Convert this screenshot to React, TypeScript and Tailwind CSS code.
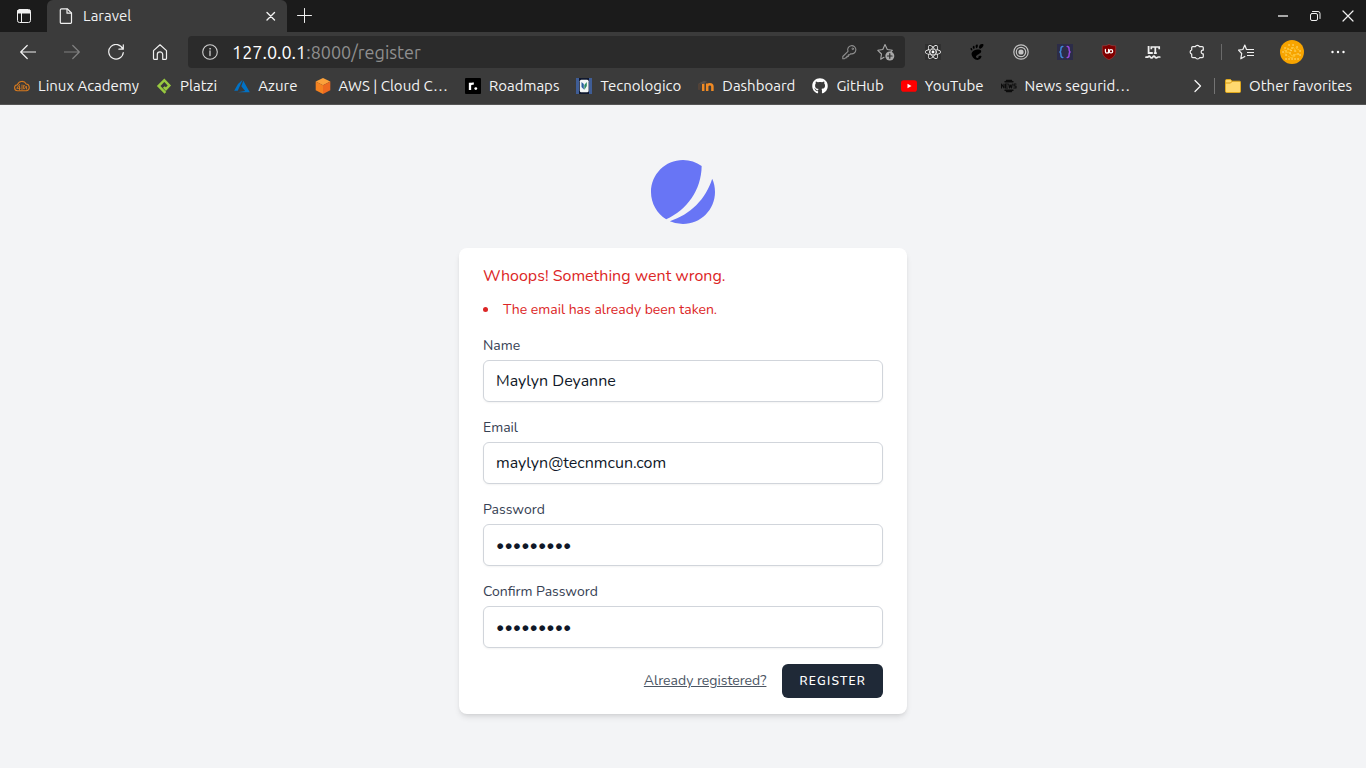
import type { ReactNode } from "react";
import { FaGithub, FaReact, FaYoutube } from "react-icons/fa";
import { SiGnome } from "react-icons/si";

const line = {
  fill: "none",
  stroke: "currentColor",
  strokeLinecap: "round" as const,
  strokeLinejoin: "round" as const,
};

function Glyph({ children, size = 16, className = "" }: { children: ReactNode; size?: number; className?: string }) {
  return (
    <svg width={size} height={size} viewBox={`0 0 ${size} ${size}`} className={`shrink-0 ${className}`} aria-hidden="true" {...line}>
      {children}
    </svg>
  );
}

function BarButton({ label, children }: { label: string; children: ReactNode }) {
  return (
    <button type="button" aria-label={label} className="flex h-8 w-11 shrink-0 items-center justify-center">
      {children}
    </button>
  );
}

function TabStrip() {
  return (
    <div className="flex h-8 items-center bg-[#1b1b1b] text-[#f0f0f0]">
      <button type="button" aria-label="Tab actions" className="flex h-8 w-[47px] shrink-0 items-center justify-center">
        <Glyph>
          <rect x="1.5" y="1.5" width="13" height="13" rx="2" />
          <path d="M2 2.5h12v2.5H2z" fill="currentColor" />
          <path d="M5.5 5v9" />
        </Glyph>
      </button>
      <div className="flex h-8 w-60 items-center rounded-t-md bg-[#3b3b3b] pl-3 pr-2">
        <Glyph>
          <path d="M2.500.8h5.700l4.300 4.200v9.200a1.200 1.200 0 0 1-1.200 1.200H2.500a1.200 1.200 0 0 1-1.200-1.200V2A1.200 1.200 0 0 1 2.500.8z" strokeWidth="1.200" />
          <path d="M8 1v4.200h4.300" strokeWidth="1.200" />
        </Glyph>
        <span className="ml-2 flex-1 text-[15px]">Laravel</span>
        <button type="button" aria-label="Close tab" className="flex size-4 items-center justify-center">
          <Glyph>
            <path d="M4 4.500l7.500 7.500M11.500 4.500L4 12" strokeWidth="1.400" />
          </Glyph>
        </button>
      </div>
      <button type="button" aria-label="New tab" className="flex h-8 w-9 items-center justify-center">
        <Glyph>
          <path d="M7.500.5v14M.5 7.500h14" />
        </Glyph>
      </button>
      <div className="ml-auto flex pr-0.5">
        <button type="button" aria-label="Minimize" className="flex size-8 items-center justify-center">
          <Glyph>
            <path d="M2 8h10" stroke="#a8a8a8" strokeWidth="2" strokeLinecap="butt" />
          </Glyph>
        </button>
        <button type="button" aria-label="Restore" className="flex size-8 items-center justify-center">
          <Glyph>
            <rect x="2.500" y="5.500" width="7" height="7" rx="1.500" />
            <path d="M4.500 3.500h5.500a2 2 0 0 1 2 2v5" />
          </Glyph>
        </button>
        <button type="button" aria-label="Close window" className="flex size-8 items-center justify-center">
          <Glyph>
            <path d="M3 3l10 10M13 3L3 13" strokeWidth="1.200" />
          </Glyph>
        </button>
      </div>
    </div>
  );
}

function Toolbar() {
  return (
    <div className="flex h-10 items-center px-1.5 text-[#f0f0f0]">
      <BarButton label="Back">
        <Glyph>
          <path d="M15.500 8H.7M7.200 1.500L.7 8l6.500 6.500" strokeWidth="1.200" />
        </Glyph>
      </BarButton>
      <BarButton label="Forward">
        <Glyph className="text-[#808080]">
          <path d="M.5 8h14.800M8.800 1.500L15.300 8l-6.500 6.500" strokeWidth="1.200" />
        </Glyph>
      </BarButton>
      <BarButton label="Refresh">
        <Glyph>
          <path d="M14.800 5A7.300 7.300 0 1 0 15.300 8.500M15.300.8V5.200h-4.400" strokeWidth="1.200" />
        </Glyph>
      </BarButton>
      <BarButton label="Home">
        <Glyph>
          <path d="M1.500 6.600L8 .8l6.500 5.800v7.900a.8.8 0 0 1-.8.8h-3V10.500a2.700 2.700 0 0 0-5.400 0v4.800h-3a.8.8 0 0 1-.8-.8z" strokeWidth="1.200" />
        </Glyph>
      </BarButton>
      <div className="mx-1.5 flex h-8 flex-1 items-center rounded bg-[#2b2b2b] pl-3.5 pr-2.5">
        <Glyph className="text-[#d0d0d0]">
          <circle cx="8" cy="8" r="7.300" strokeWidth="1.100" />
          <path d="M8 7v4.500" strokeWidth="1.300" />
          <circle cx="8" cy="4.800" r=".5" fill="currentColor" strokeWidth=".6" />
        </Glyph>
        <div className="ml-3.5 flex-1 text-lg text-[#8f8f8f]">
          <span className="text-white">127.0.0.1</span>:8000/register
        </div>
        <button type="button" aria-label="Saved passwords" className="mr-5 text-[#8f8f8f]">
          <Glyph>
            <path d="M7 7.300a4.100 4.100 0 1 1 2.800 2.400L8.600 10.900H7.300v1.500H5.800v1.400H4.500l-.9.900H1.800v-2.200z" strokeWidth="1.100" />
            <circle cx="11.800" cy="4.800" r=".8" />
          </Glyph>
        </button>
        <button type="button" aria-label="Add to favorites" className="text-[#a8a8a8]">
          <Glyph size={18}>
            <path d="M7 14.300l-3.300 1.900.8-5.200L.8 7.300l5-.8L8 1.500l2.300 5 5 .8-1.500 1.500" strokeWidth="1.100" />
            <circle cx="12.800" cy="13" r="4.500" fill="currentColor" stroke="none" />
            <path d="M12.800 10.700v4.600M10.500 13h4.600" stroke="#2b2b2b" strokeWidth="1.200" />
          </Glyph>
        </button>
      </div>
      <BarButton label="React Developer Tools">
        <span className="bg-[#303030]">
          <FaReact className="size-4 text-white" />
        </span>
      </BarButton>
      <BarButton label="GNOME Shell integration">
        <SiGnome className="size-4 text-black" />
      </BarButton>
      <BarButton label="Recorder">
        <Glyph className="text-[#c4c4c4]">
          <circle cx="8" cy="8" r="7.200" strokeWidth="1.200" />
          <circle cx="8" cy="8" r="4.700" strokeWidth="1.200" />
          <circle cx="8" cy="8" r="2.600" fill="currentColor" stroke="none" />
        </Glyph>
      </BarButton>
      <BarButton label="JSON viewer">
        <Glyph>
          <rect width="16" height="16" fill="#2c2c48" stroke="none" />
          <path d="M5.800 2.500c-1.600 0-1.800.8-1.800 2 0 2-.2 3-1 3.500.8.500 1 1.500 1 3.500 0 1.200.2 2 1.800 2" stroke="#3f86d8" strokeWidth="1.500" />
          <path d="M10.200 2.500c1.600 0 1.800.8 1.800 2 0 2 .2 3 1 3.500-.8.500-1 1.500-1 3.500 0 1.200-.2 2-1.800 2" stroke="#9848e0" strokeWidth="1.500" />
        </Glyph>
      </BarButton>
      <BarButton label="uBlock Origin">
        <Glyph>
          <path d="M8 .4c2 1.200 4.200 1.400 6.700 1.400v5.200c0 4.800-2.700 6.800-6.700 8.700-4-1.900-6.700-3.900-6.700-8.700V1.800C3.800 1.800 6 1.600 8 .4z" fill="#800000" stroke="#a04040" strokeWidth=".6" />
          <path d="M4.400 5.300v2.200a1.600 1.600 0 0 0 3.200 0V5.300M7.600 5.300v3.500" stroke="#fff" strokeWidth="1.200" />
          <circle cx="10" cy="7.300" r="1.700" stroke="#fff" strokeWidth="1.200" />
        </Glyph>
      </BarButton>
      <BarButton label="LanguageTool">
        <Glyph className="text-[#f0f0f0]">
          <path d="M3.600 2v7h4.200" strokeWidth="1.800" strokeLinecap="butt" strokeLinejoin="miter" />
          <path d="M6.300 5.200V3h7.900v2.200M10.300 3v6.800M8.900 9.200h2.900" strokeWidth="1.700" strokeLinecap="butt" strokeLinejoin="miter" />
          <path d="M1 13.200h1.200c1.300 0 1-1 2-1s1 1.700 2.400 1.700 1.100-1.700 2.300-1.700 1 1.700 2.300 1.700 1-.9 2-.9h1.600" strokeWidth="1.700" />
        </Glyph>
      </BarButton>
      <BarButton label="Extensions">
        <Glyph>
          <path d="M3.700 2.700h2.600a2.200 2 0 0 1 4.200 0h2.800a1 1 0 0 1 1 1v2.500h-.7a1.900 1.900 0 0 0 0 3.700h.7v2.700a1 1 0 0 1-1 1h-2.600a2.200 2 0 0 1-4.200 0H3.700a1 1 0 0 1-1-1v-2.500a2.200 2.200 0 0 1 0-4.200V3.700a1 1 0 0 1 1-1z" strokeWidth="1.200" />
        </Glyph>
      </BarButton>
      <div className="mx-0.5 h-4 w-px shrink-0 bg-[#6a6a6a]" />
      <BarButton label="Favorites">
        <Glyph>
          <path d="M8.500 5.500L6.800 1 4.900 5.500.5 6.200 3.700 9.500l-.9 5.300 4-2.300" strokeWidth="1.200" />
          <path d="M9 5.500h7M9 8.500h7M9 11.500h7" strokeLinecap="butt" />
        </Glyph>
      </BarButton>
      <button type="button" aria-label="Profile" className="mx-0.5 flex h-8 w-11 shrink-0 items-center justify-center">
        <Glyph size={24}>
          <circle cx="12" cy="12" r="12" fill="#f7a400" stroke="none" />
          <g stroke="#ffeb9c" strokeWidth="1.300">
            <path d="M5 8h.1M9 5h.1M13 5h.1M17 7h.1M20 11h.1M3 12h.1M8 9h.1M12 8h.1M15 11h.1M6 15h.1M10 13h.1M14 15h.1M18 14h.1M6 19h.1M9 19h.1M12 19h.1M15 19h.1M18 19h.1M6 11h.1M11 10.500h.1M20 15h.1" />
          </g>
          <g stroke="#ffc52e" strokeWidth=".9">
            <path d="M7 8l3 2 3-3 3 4M5 13l4-1 3 4 5-2M8 16l3 2 4-2M4 10l3 1M16 8l3 2" />
          </g>
        </Glyph>
      </button>
      <BarButton label="Settings and more">
        <Glyph className="text-white">
          <g fill="currentColor" stroke="none">
            <circle cx="2.500" cy="8" r="1.200" />
            <circle cx="8" cy="8" r="1.200" />
            <circle cx="13.500" cy="8" r="1.200" />
          </g>
        </Glyph>
      </BarButton>
    </div>
  );
}

const bookmarks: { name: string; icon: ReactNode }[] = [
  {
    name: "Linux Academy",
    icon: (
      <Glyph className="text-[#d87a1e]">
        <path d="M3.800 12.700a3 3 0 0 1-.4-6A4.800 4.800 0 0 1 12.200 6a3.400 3.400 0 0 1 .4 6.700z" strokeWidth="1.100" />
        <path d="M5.500 6.500L2.800 10.300h3.400M5.500 8v4M8 7v4.500M10 7.300c2 0 2 3.600 0 3.600zM12.500 8.500v2.500" strokeWidth=".9" />
      </Glyph>
    ),
  },
  {
    name: "Platzi",
    icon: (
      <Glyph className="text-[#98ca3f]">
        <path d="M9.400 14.900L2.600 8 8.300 2.200l5 5.300-3.400 3.700L7.800 9" strokeWidth="2.500" strokeLinejoin="miter" strokeLinecap="butt" />
      </Glyph>
    ),
  },
  {
    name: "Azure",
    icon: (
      <Glyph>
        <path d="M8.700 1.800L4 6 .2 12.800h3.500z" fill="#0072c6" stroke="none" />
        <path d="M9.300 2.800l-2 5.500 3.800 4.700-7.300 1.200h12z" fill="#0072c6" stroke="none" />
      </Glyph>
    ),
  },
  {
    name: "AWS | Cloud C…",
    icon: (
      <Glyph>
        <g stroke="none">
          <path d="M8 0l7.300 3.600L8 7.300.7 3.600z" fill="#fba13b" />
          <path d="M.7 3.600L8 7.300V16L.7 12.300z" fill="#f58220" />
          <path d="M15.300 3.600L8 7.300V16l7.300-3.700z" fill="#ee6a20" />
        </g>
      </Glyph>
    ),
  },
  {
    name: "Roadmaps",
    icon: (
      <Glyph>
        <rect width="16" height="16" rx="1" fill="#000" stroke="none" />
        <path d="M5 12V4.700M5 7.800c0-1.600 1.200-2.400 3.800-2.100" stroke="#fff" strokeWidth="2.300" strokeLinecap="butt" />
        <circle cx="10.800" cy="10.600" r="1.400" fill="#fff" stroke="none" />
      </Glyph>
    ),
  },
  {
    name: "Tecnologico",
    icon: (
      <Glyph>
        <g stroke="none">
          <rect width="16" height="16" fill="#3f5d96" />
          <path d="M3 0h10v16H3z" fill="#10182e" />
          <rect x="3.800" y="1.800" width="8.800" height="12.400" rx="1.500" fill="#f4f6f5" />
          <path d="M5.500 4l2.300 2v5.500L5.500 9z" fill="#2a5f9e" />
          <path d="M8.300 7l2.500-3v4l-2.500 4z" fill="#2d8a63" />
        </g>
      </Glyph>
    ),
  },
  {
    name: "Dashboard",
    icon: (
      <Glyph>
        <path d="M5.200 5.500V13" stroke="#f08a24" strokeWidth="2.500" strokeLinecap="butt" />
        <path d="M9.200 13V5.500M9.200 8.500c0-3 5.200-3 5.200 0V13" stroke="#f08a24" strokeWidth="2.500" strokeLinecap="butt" />
        <path d="M.5 5.500L6 2.800l3 1L5 6z" fill="#57504c" stroke="none" />
        <path d="M1 6v5.500" stroke="#6b4a34" />
        <path d="M2.500 6v4" stroke="#4a403a" />
      </Glyph>
    ),
  },
  { name: "GitHub", icon: <FaGithub className="size-4 shrink-0 text-white" /> },
  {
    name: "YouTube",
    icon: (
      <Glyph>
        <rect y="2.300" width="16" height="11.400" rx="2.800" fill="#ff0000" stroke="none" />
        <path d="M6.500 5.700v4.600L10.500 8z" fill="#fff" stroke="none" />
      </Glyph>
    ),
  },
  {
    name: "News segurid…",
    icon: (
      <Glyph className="text-[#0c0c0c]">
        <path d="M4 3.800h8M4 12.200h8M5.500 2.500h5M5.500 13.500h5" strokeWidth="1.400" />
        <path d="M.5 10V6l2.500 4V6M6.500 6H4.500v4h2M4.500 8h1.700M7.700 6l.8 4 1-3 1 3 .8-4M15 6h-2v2h2v2h-2.200" strokeWidth="1.100" />
      </Glyph>
    ),
  },
];

function BookmarksBar() {
  return (
    <nav aria-label="Favorites" className="flex h-[33px] items-start border-b border-[#555555] px-3.5 pt-[3px] text-[15px] text-[#f4f4f4]">
      <ul className="flex gap-[17px]">
        {bookmarks.map((b) => (
          <li key={b.name}>
            <a href="#" className="flex items-center gap-2 whitespace-nowrap">
              {b.icon}
              {b.name}
            </a>
          </li>
        ))}
      </ul>
      <div className="ml-auto flex items-center gap-2">
        <button type="button" aria-label="More favorites">
          <Glyph>
            <path d="M5 2.500L10.500 8 5 13.500" strokeWidth="1.300" />
          </Glyph>
        </button>
        <div className="h-4 w-px bg-[#747474]" />
        <a href="#" className="ml-0.5 flex items-center gap-2 whitespace-nowrap">
          <Glyph>
            <path d="M.5 2.500a1 1 0 0 1 1-1h4l1.500 1.700h7.500a1 1 0 0 1 1 1v9.300a1 1 0 0 1-1 1h-13a1 1 0 0 1-1-1z" fill="#ffd970" stroke="#e0a81c" />
            <path d="M.5 5h5L7.200 3.200" stroke="#d59b10" />
          </Glyph>
          Other favorites
        </a>
      </div>
    </nav>
  );
}

function Field({ id, label, type, value }: { id: string; label: string; type: string; value: string }) {
  return (
    <div className="mt-4">
      <label htmlFor={id} className="block text-sm text-gray-700">
        {label}
      </label>
      <input
        id={id}
        name={id}
        type={type}
        defaultValue={value}
        className="mt-1 block w-full rounded-md border border-[#d1d5db] bg-white px-3 py-2 text-base text-gray-900 shadow-xs"
      />
    </div>
  );
}

export default function App() {
  return (
    <div className="flex min-h-screen flex-col bg-[#f3f4f6]">
      <header className="bg-[#3b3b3b] font-['Ubuntu','Noto_Sans',sans-serif]">
        <TabStrip />
        <Toolbar />
        <BookmarksBar />
      </header>
      <main className="flex flex-1 flex-col items-center justify-center pt-px font-['Nunito','Noto_Sans',sans-serif]">
        <a href="#" aria-label="Home">
          <svg viewBox="0 0 48 48" fill="#6875f5" className="size-16" aria-hidden="true">
            <path d="M11.395 44.428C4.557 40.198 0 32.632 0 24 0 10.745 10.745 0 24 0a23.891 23.891 0 0113.997 4.502c-.2 17.907-11.097 33.245-26.602 39.926z" />
            <path d="M14.134 45.885A23.914 23.914 0 0024 48c13.255 0 24-10.745 24-24 0-3.516-.756-6.856-2.115-9.866-4.659 15.143-16.608 27.092-31.750 31.751z" />
          </svg>
        </a>
        <div className="mt-6 w-full max-w-md rounded-lg bg-white px-6 py-4 shadow-md">
          <div role="alert" className="text-[#dc2626]">
            <p className="text-base">Whoops! Something went wrong.</p>
            <ul className="mt-3 list-inside list-disc text-sm">
              <li>The email has already been taken.</li>
            </ul>
          </div>
          <form onSubmit={(e) => e.preventDefault()}>
            <Field id="name" label="Name" type="text" value="Maylyn Deyanne" />
            <Field id="email" label="Email" type="email" value="maylyn@tecnmcun.com" />
            <Field id="password" label="Password" type="password" value="secret123" />
            <Field id="password_confirmation" label="Confirm Password" type="password" value="secret123" />
            <div className="mt-4 flex items-center justify-end gap-4">
              <a href="#" className="text-sm text-[#4b5563] underline">
                Already registered?
              </a>
              <button type="submit" className="rounded-md border border-transparent bg-[#1f2937] px-4 py-2 text-xs font-semibold uppercase tracking-widest text-white">
                Register
              </button>
            </div>
          </form>
        </div>
      </main>
    </div>
  );
}
